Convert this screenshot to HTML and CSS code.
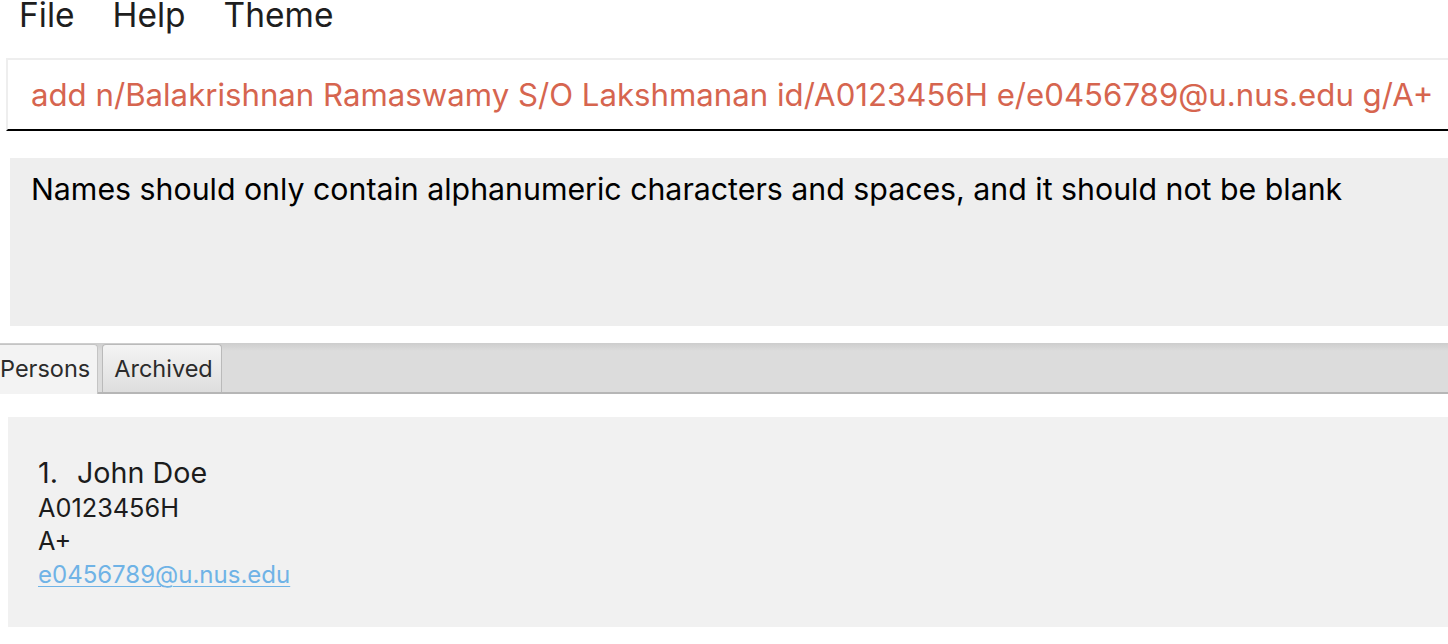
FILE: index.html
```html
<!DOCTYPE html>
<html>
<head>
<meta charset="utf-8">
<link rel="stylesheet" href="styles.css">
</head>
<body>
<div class="app">
  <nav class="menubar">
    <span class="menu-item">File</span>
    <span class="menu-item">Help</span>
    <span class="menu-item">Theme</span>
  </nav>
  <div class="command-box">
    <span class="command-text">add n/Balakrishnan Ramaswamy S/O Lakshmanan id/A0123456H e/e0456789@u.nus.edu g/A+</span>
  </div>
  <div class="result-box">
    <span class="result-text">Names should only contain alphanumeric characters and spaces, and it should not be blank</span>
  </div>
  <div class="tab-bar">
    <div class="tab tab-selected">Persons</div>
    <div class="tab">Archived</div>
  </div>
  <div class="list-panel">
    <div class="card">
      <div class="card-name"><span class="card-index">1.</span>John Doe</div>
      <div class="card-line">A0123456H</div>
      <div class="card-line">A+</div>
      <div class="card-line card-email">e0456789@u.nus.edu</div>
    </div>
  </div>
</div>
</body>
</html>
```

FILE: styles.css
```css
html, body {
  margin: 0;
  padding: 0;
  background: #ffffff;
}
body {
  font-family: Inter, "Liberation Sans", Arial, sans-serif;
  width: 1448px;
  height: 644px;
  overflow: hidden;
}
.app {
  display: flex;
  flex-direction: column;
}
.menubar {
  display: flex;
  height: 58px;
}
.menu-item {
  font-size: 33.5px;
  line-height: 30px;
  color: #1e1e1e;
  padding: 0 19px;
}
.command-box {
  margin-left: 6px;
  height: 69px;
  border-top: 2px solid #eeeeee;
  border-left: 2px solid #eeeeee;
  border-bottom: 2px solid #000000;
  background: #ffffff;
  display: flex;
  align-items: center;
  padding-left: 23px;
}
.command-text {
  font-size: 31.2px;
  color: #d6654f;
  white-space: nowrap;
}
.result-box {
  margin-top: 27px;
  margin-left: 10px;
  height: 168px;
  background: #eeeeee;
  padding: 13px 0 0 21px;
  box-sizing: border-box;
}
.result-text {
  font-size: 30.3px;
  line-height: 36px;
  color: #000000;
  white-space: nowrap;
}
.tab-bar {
  margin-top: 17px;
  height: 49px;
  background: linear-gradient(#cdcdcd 0px, #dcdcdc 8px, #dcdcdc 100%);
  border-bottom: 2px solid #b6b6b6;
  display: flex;
  align-items: flex-end;
  gap: 4px;
}
.tab {
  height: 48px;
  box-sizing: border-box;
  border: 1px solid #bababa;
  border-bottom: none;
  border-radius: 4px 4px 0 0;
  background: linear-gradient(#f4f4f4, #dedede);
  font-size: 23.5px;
  color: #2b2b2b;
  padding: 10px 8px 0 11px;
  line-height: 28px;
}
.tab-selected {
  background: #f3f3f3;
  margin-left: -6px;
  padding-left: 5px;
  padding-right: 7px;
  height: 50px;
  margin-bottom: -2px;
  border-color: #c4c4c4;
}
.list-panel {
  margin-top: 23px;
  margin-left: 8px;
  height: 210px;
  background: #f1f1f1;
}
.card {
  padding: 38px 0 0 30px;
  display: flex;
  flex-direction: column;
}
.card-name {
  font-size: 28.7px;
  line-height: 36px;
  color: #1c1c1c;
}
.card-index {
  display: inline-block;
  width: 39px;
}
.card-line {
  font-size: 25.3px;
  line-height: 33px;
  color: #1c1c1c;
}
.card-email {
  font-size: 24px;
  margin-top: 1px;
  color: #6fb3e6;
  text-decoration: underline;
  text-underline-offset: 3px;
  text-decoration-thickness: 1px;
}
```
